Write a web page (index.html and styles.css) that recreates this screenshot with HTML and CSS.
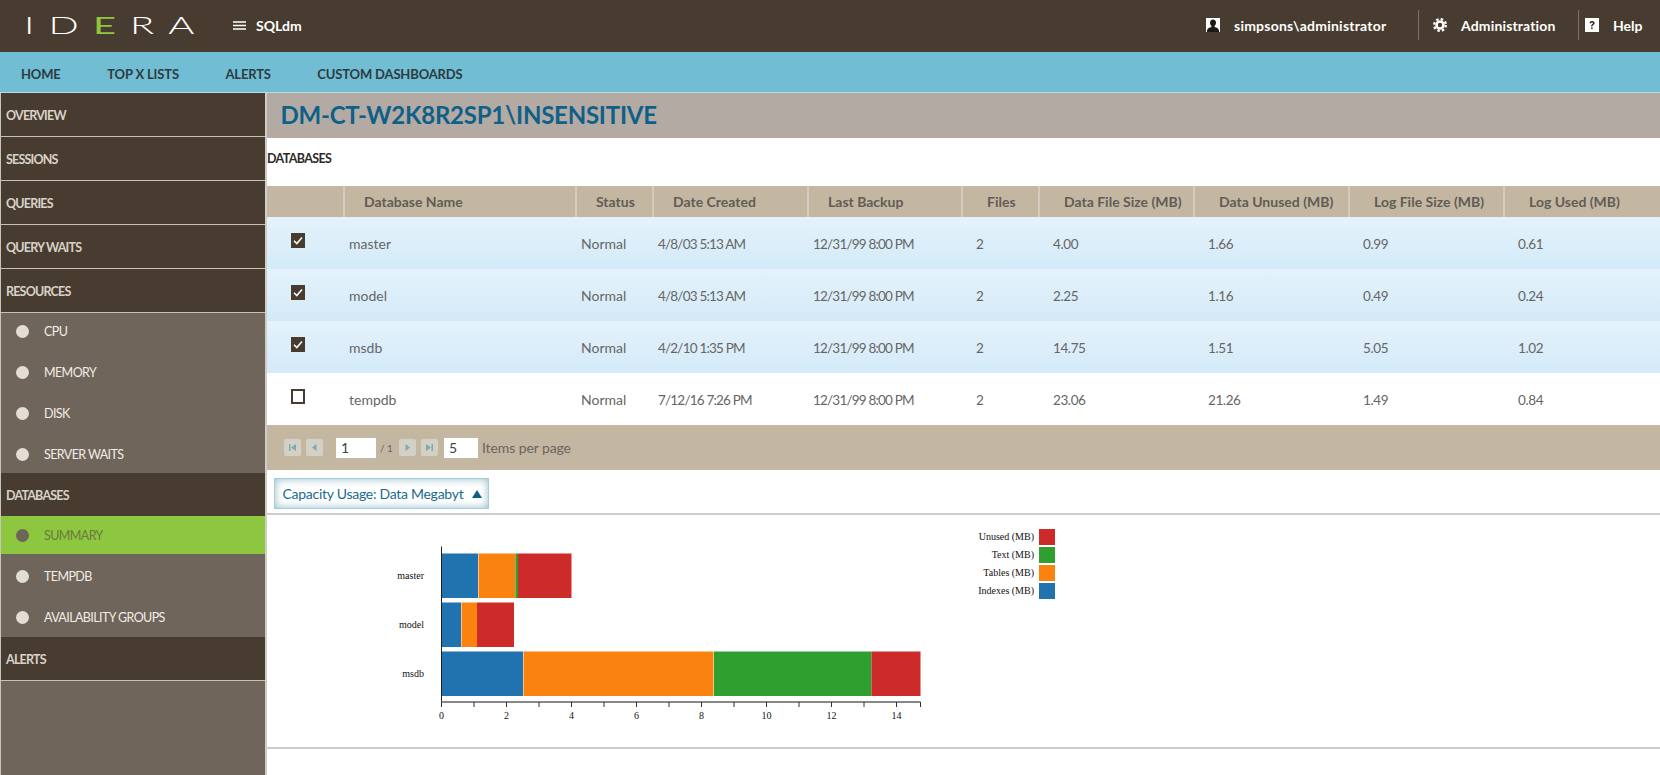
FILE: index.html
```html
<!DOCTYPE html>
<html lang="en">
<head>
<meta charset="utf-8">
<title>SQLdm</title>
<link rel="stylesheet" href="styles.css">
</head>
<body>
<div class="page">
  <header class="topbar">
    <div class="logo"><span class="logo-text">ID<span class="logo-e">E</span>RA</span></div>
    <div class="product">
      <svg class="burger" width="13" height="9" viewBox="0 0 13 9"><path d="M0 1h13M0 4.500h13M0 8h13" stroke="#fff" stroke-width="1.400"/></svg>
      <span>SQLdm</span>
    </div>
    <div class="top-right">
      <div class="top-item top-user">
        <svg width="14" height="14" viewBox="0 0 14 14"><rect width="14" height="14" fill="#fff"/><path d="M7 1.500c-2 0-3 1.400-3 3.200 0 1.300.6 2.400 1.400 3V9C3.500 9.500 1.500 10.300 1 12.500V14h12v-1.500C12.500 10.300 10.500 9.500 8.600 9V7.700c.8-.6 1.400-1.700 1.400-3 0-1.800-1-3.200-3-3.200z" fill="#1d1a16"/></svg>
        <span>simpsons\administrator</span>
      </div>
      <div class="top-item top-admin">
        <svg width="14" height="14" viewBox="0 0 14 14"><circle cx="7" cy="7" r="5.900" fill="none" stroke="#fff" stroke-width="2.200" stroke-dasharray="2.500 2.130"/><circle cx="7" cy="7" r="3.500" fill="none" stroke="#fff" stroke-width="2.600"/></svg>
        <span>Administration</span>
      </div>
      <div class="top-item top-help">
        <svg width="14" height="14" viewBox="0 0 14 14"><rect width="14" height="14" fill="#fff"/><path d="M4.500 5.200C4.600 3.700 5.600 3 7 3c1.500 0 2.600.8 2.600 2.100 0 1-.6 1.500-1.300 2-.6.400-.8.700-.8 1.400H6.100c0-1.100.3-1.700 1-2.200.5-.4.900-.6.900-1.100 0-.5-.4-.8-1-.8-.6 0-1 .3-1.100.9zM6.100 9.500h1.500V11H6.100z" fill="#2b241d"/></svg>
        <span>Help</span>
      </div>
    </div>
  </header>

  <nav class="mainnav">
    <a class="mainnav-link">HOME</a>
    <a class="mainnav-link">TOP X LISTS</a>
    <a class="mainnav-link">ALERTS</a>
    <a class="mainnav-link">CUSTOM DASHBOARDS</a>
  </nav>

  <div class="content">
    <aside class="sidebar">
      <div class="side-head">OVERVIEW</div>
      <div class="side-head">SESSIONS</div>
      <div class="side-head">QUERIES</div>
      <div class="side-head">QUERY WAITS</div>
      <div class="side-head">RESOURCES</div>
      <div class="side-group side-group-res">
        <div class="side-item"><i class="dot"></i>CPU</div>
        <div class="side-item"><i class="dot"></i>MEMORY</div>
        <div class="side-item"><i class="dot"></i>DISK</div>
        <div class="side-item"><i class="dot"></i>SERVER WAITS</div>
      </div>
      <div class="side-head side-head-plain">DATABASES</div>
      <div class="side-group">
        <div class="side-item side-item-active"><i class="dot"></i>SUMMARY</div>
        <div class="side-item side-item-db"><i class="dot"></i>TEMPDB</div>
        <div class="side-item side-item-db"><i class="dot"></i>AVAILABILITY GROUPS</div>
      </div>
      <div class="side-head">ALERTS</div>
      <div class="side-fill"></div>
    </aside>

    <main class="main">
      <h1 class="title">DM-CT-W2K8R2SP1\INSENSITIVE</h1>
      <div class="section-label">DATABASES</div>

      <table class="grid">
        <colgroup>
          <col class="c-check"><col class="c-name"><col class="c-status"><col class="c-date"><col class="c-date2">
          <col class="c-status"><col class="c-date"><col class="c-date"><col class="c-date"><col>
        </colgroup>
        <thead>
          <tr>
            <th></th><th>Database Name</th><th>Status</th><th>Date Created</th><th>Last Backup</th>
            <th class="wide">Files</th><th class="wide">Data File Size (MB)</th><th class="wide">Data Unused (MB)</th><th class="wide">Log File Size (MB)</th><th class="wide">Log Used (MB)</th>
          </tr>
        </thead>
        <tbody>
          <tr class="sel">
            <td class="cell-check"><span class="check"><svg width="14" height="15" viewBox="0 0 14 15"><path d="M3 7.800l2.800 2.800L11 4.400" fill="none" stroke="#fff" stroke-width="1.500"/></svg></span></td>
            <td>master</td><td>Normal</td><td>4/8/03 5:13 AM</td><td>12/31/99 8:00 PM</td><td>2</td><td>4.00</td><td>1.66</td><td>0.99</td><td>0.61</td>
          </tr>
          <tr class="sel">
            <td class="cell-check"><span class="check"><svg width="14" height="15" viewBox="0 0 14 15"><path d="M3 7.800l2.800 2.800L11 4.400" fill="none" stroke="#fff" stroke-width="1.500"/></svg></span></td>
            <td>model</td><td>Normal</td><td>4/8/03 5:13 AM</td><td>12/31/99 8:00 PM</td><td>2</td><td>2.25</td><td>1.16</td><td>0.49</td><td>0.24</td>
          </tr>
          <tr class="sel">
            <td class="cell-check"><span class="check"><svg width="14" height="15" viewBox="0 0 14 15"><path d="M3 7.800l2.800 2.800L11 4.400" fill="none" stroke="#fff" stroke-width="1.500"/></svg></span></td>
            <td>msdb</td><td>Normal</td><td>4/2/10 1:35 PM</td><td>12/31/99 8:00 PM</td><td>2</td><td>14.75</td><td>1.51</td><td>5.05</td><td>1.02</td>
          </tr>
          <tr>
            <td class="cell-check"><span class="check check-off"></span></td>
            <td>tempdb</td><td>Normal</td><td>7/12/16 7:26 PM</td><td>12/31/99 8:00 PM</td><td>2</td><td>23.06</td><td>21.26</td><td>1.49</td><td>0.84</td>
          </tr>
        </tbody>
      </table>

      <div class="pager">
        <span class="pg-btn"><svg width="9" height="9" viewBox="0 0 9 9"><path d="M1 1h1.500v7H1zM8 1v7L3 4.500z" fill="#7fa9ae"/></svg></span>
        <span class="pg-btn pg-btn-prev"><svg width="9" height="9" viewBox="0 0 9 9"><path d="M6.500 1v7L2 4.500z" fill="#7fa9ae"/></svg></span>
        <span class="pg-input pg-input-page">1</span>
        <span class="pg-of">/ 1</span>
        <span class="pg-btn"><svg width="9" height="9" viewBox="0 0 9 9"><path d="M2.500 1v7L7 4.500z" fill="#7fa9ae"/></svg></span>
        <span class="pg-btn pg-btn-last"><svg width="9" height="9" viewBox="0 0 9 9"><path d="M1 1v7l5-3.500zM6.500 1H8v7H6.500z" fill="#7fa9ae"/></svg></span>
        <span class="pg-input pg-input-size">5</span>
        <span class="pg-label">Items per page</span>
      </div>

      <div class="combo-row">
        <div class="combo">
          <span class="combo-text">Capacity Usage: Data Megabyt</span>
          <svg width="10" height="8" viewBox="0 0 10 8"><path d="M5 0l5 8H0z" fill="#0f5e87"/></svg>
        </div>
      </div>

      <div class="chart-panel">
        <svg class="chart" width="1393" height="232" viewBox="267 515 1393 232">
          <g class="bars">
            <rect x="441.500" y="553.500" width="36.500" height="44.500" fill="#2173b0"/>
            <rect x="478.500" y="553.500" width="37" height="44.500" fill="#fa830f"/>
            <rect x="515.500" y="553.500" width="2.500" height="44.500" fill="#2f9f2f"/>
            <rect x="518" y="553.500" width="53.500" height="44.500" fill="#cd2a2a"/>

            <rect x="441.500" y="602.500" width="19.500" height="44.500" fill="#2173b0"/>
            <rect x="461.500" y="602.500" width="15.500" height="44.500" fill="#fa830f"/>
            <rect x="477" y="602.500" width="37" height="44.500" fill="#cd2a2a"/>

            <rect x="441.500" y="651.500" width="81.500" height="44.500" fill="#2173b0"/>
            <rect x="523.500" y="651.500" width="190" height="44.500" fill="#fa830f"/>
            <rect x="714" y="651.500" width="157.500" height="44.500" fill="#2f9f2f"/>
            <rect x="871.500" y="651.500" width="49" height="44.500" fill="#cd2a2a"/>
          </g>
          <path d="M441.500 546.500V707" stroke="#222" fill="none"/>
          <path d="M441.500 702H920.500" stroke="#888" stroke-width="2" fill="none"/>
          <path d="M441.500 702v5M474 702v5M506.500 702v5M539 702v5M571.500 702v5M604 702v5M636.500 702v5M669 702v5M701.500 702v5M734 702v5M766.500 702v5M799 702v5M831.500 702v5M864 702v5M896.500 702v5M920.500 702v5" stroke="#333" fill="none" class="ticks"/>
          <g class="axis-y">
            <text x="424" y="579">master</text>
            <text x="424" y="628">model</text>
            <text x="424" y="677">msdb</text>
          </g>
          <g class="axis-x">
            <text x="441.500" y="719">0</text>
            <text x="506.500" y="719">2</text>
            <text x="571.500" y="719">4</text>
            <text x="636.500" y="719">6</text>
            <text x="701.500" y="719">8</text>
            <text x="766.500" y="719">10</text>
            <text x="831.500" y="719">12</text>
            <text x="896.500" y="719">14</text>
          </g>
          <g class="legend">
            <rect x="1039" y="529" width="16" height="16" fill="#cd2a2a"/>
            <rect x="1039" y="547" width="16" height="16" fill="#2f9f2f"/>
            <rect x="1039" y="565" width="16" height="16" fill="#fa830f"/>
            <rect x="1039" y="583" width="16" height="16" fill="#2173b0"/>
            <text x="1034" y="540">Unused (MB)</text>
            <text x="1034" y="558">Text (MB)</text>
            <text x="1034" y="576">Tables (MB)</text>
            <text x="1034" y="594">Indexes (MB)</text>
          </g>
        </svg>
      </div>
    </main>
  </div>
</div>
</body>
</html>
```
FILE: styles.css
```css
* { box-sizing: border-box; }
html, body { margin: 0; padding: 0; background: #fff; }
body { font-family: Lato, "Open Sans", sans-serif; font-size: 14px; color: #666; }

.page { width: 1660px; height: 775px; display: flex; flex-direction: column; overflow: hidden; }

/* top bar */
.topbar { height: 52px; flex: none; background: #483c30; color: #fff; display: flex; align-items: center; padding-bottom: 2px; }
.logo { width: 233px; padding-left: 24px; height: 50px; overflow: hidden; }
.logo-text { display: inline-block; font-family: Lato, sans-serif; font-weight: 300; font-size: 24px; line-height: 50px; letter-spacing: 8.500px; color: #fff; transform: scaleX(1.660); transform-origin: left center; }
.logo-e { color: #8dc63f; font-weight: 400; }
.product { display: flex; align-items: center; gap: 10px; font-weight: 700; font-size: 14px; }
.burger { display: block; }
.top-right { margin-left: auto; display: flex; align-items: center; height: 30px; }
.top-item { display: flex; align-items: center; height: 30px; font-weight: 700; font-size: 14px; }
.top-item svg { flex: none; }
.top-user { gap: 14px; width: 212px; letter-spacing: 0.230px; }
.top-admin { gap: 14px; width: 160px; padding-left: 14px; border-left: 1px solid #7d7367; letter-spacing: 0.150px; }
.top-help { gap: 14px; width: 82px; padding-left: 6px; border-left: 1px solid #7d7367; }

/* main nav */
.mainnav { height: 41px; flex: none; background: #70bdd4; border-bottom: 1px solid #b9dbe4; display: flex; align-items: center; padding: 3px 0 0 21px; }
.mainnav-link { font-weight: 700; font-size: 13px; letter-spacing: -0.150px; color: #2e3b40; margin-right: 46.500px; }

/* layout */
.content { flex: 1; display: flex; min-height: 0; }

/* sidebar */
.sidebar { width: 267px; flex: none; display: flex; flex-direction: column; background: #70655a; border-left: 1px solid #c9c5bd; border-right: 2px solid #cfcdc8; }
.side-head { height: 44px; flex: none; background: #483c30; border-bottom: 1px solid #c9c2b2; color: #d8d2c8; font-weight: 700; font-size: 12.500px; letter-spacing: -0.800px; padding: 1px 0 0 5px; display: flex; align-items: center; }
.side-head-plain { height: 43px; border-bottom: 0; }
.side-group { flex: none; }
.side-group-res { height: 160px; overflow: hidden; }
.side-item { height: 41px; display: flex; align-items: flex-start; padding: 9px 0 0 15px; color: #f1ede6; font-size: 12.500px; line-height: 20px; letter-spacing: -0.600px; }
.dot { width: 13px; height: 13px; border-radius: 50%; background: #e3ded4; margin: 3px 15px 0 0; flex: none; }
.side-item-active { height: 38px; background: #8dc63f; color: #6c7a40; padding-top: 10px; }
.side-item-active .dot { background: #6f645a; }
.side-item-db { height: 41.500px; padding-top: 12.500px; }
.side-fill { flex: 1; }

/* main */
.main { flex: 1; min-width: 0; display: flex; flex-direction: column; }
.title { margin: 0; height: 45px; flex: none; background: #b4aaa4; color: #0f6088; font-size: 24px; letter-spacing: -0.230px; font-weight: 700; line-height: 44px; padding-left: 13.500px; }
.section-label { height: 48px; flex: none; padding: 11px 0 0; line-height: 20px; font-weight: 700; font-size: 12.500px; color: #2c2a28; letter-spacing: -0.650px; }

/* table */
.grid { width: 1393px; border-collapse: separate; border-spacing: 0; table-layout: fixed; flex: none; }
.c-check { width: 76px; }
.c-name { width: 232px; }
.c-status { width: 77px; }
.c-date { width: 155px; }
.c-date2 { width: 154px; }
.grid th { height: 31px; background: #c3b7a2; border-left: 2px solid #d3cbbd; padding: 0 0 0 19px; text-align: left; font-size: 14px; font-weight: 700; color: #625c55; }
.grid th:first-child { border-left: 0; }
.grid th.wide { padding-left: 24px; }
.grid td { height: 52px; padding: 0 0 0 6px; font-size: 14px; color: #666; }
.grid td:nth-child(4), .grid td:nth-child(5) { font-size: 13.500px; letter-spacing: -0.800px; padding-top: 2px; }
.grid td:nth-child(n+6) { padding: 2px 0 0 15px; font-size: 13.500px; letter-spacing: -0.400px; }
.grid tr.sel td { background: linear-gradient(#e4f2fb, #d4eaf8); }
.grid td.cell-check { padding: 0 0 6px 24px; }
.check { display: block; width: 14px; height: 15px; background: #483c30; }
.check svg { display: block; }
.check-off { background: #fff; border: 2px solid #483c30; }

/* pager */
.pager { height: 45px; flex: none; background: #c3b7a2; display: flex; align-items: center; padding-left: 17px; }
.pg-btn { width: 17px; height: 17px; background: #d3d1c5; border-radius: 2px; display: flex; align-items: center; justify-content: center; margin-right: 5px; flex: none; }
.pg-btn-prev { margin-right: 13px; }
.pg-btn-last { margin-right: 6px; }
.pg-input { height: 20px; background: #fff; color: #444; font-size: 14px; line-height: 20px; padding-left: 5px; flex: none; }
.pg-input-page { width: 40px; }
.pg-input-size { width: 34px; }
.pg-of { width: 23px; padding-left: 4px; font-size: 10px; color: #666; flex: none; }
.pg-label { margin-left: 4px; color: #6a6560; font-size: 14px; letter-spacing: -0.100px; }

/* combo */
.combo-row { height: 43px; flex: none; padding: 8px 0 0 7px; }
.combo { width: 215px; height: 31px; display: flex; align-items: center; gap: 9px; padding-left: 7.500px; border: 1px solid #a8cdd8; box-shadow: inset 0 0 8px #93bccb; color: #1a6a8e; font-size: 14px; letter-spacing: -0.270px; }
.combo-text { width: 180px; white-space: nowrap; flex: none; }

/* chart */
.chart-panel { height: 236px; flex: none; border-top: 2px solid #ccc; border-bottom: 2px solid #ccc; }
.chart { display: block; }
.chart text { font-family: "Liberation Serif", serif; font-size: 10px; fill: #111; }
.axis-y text, .legend text { text-anchor: end; }
.axis-x text { text-anchor: middle; }
```
